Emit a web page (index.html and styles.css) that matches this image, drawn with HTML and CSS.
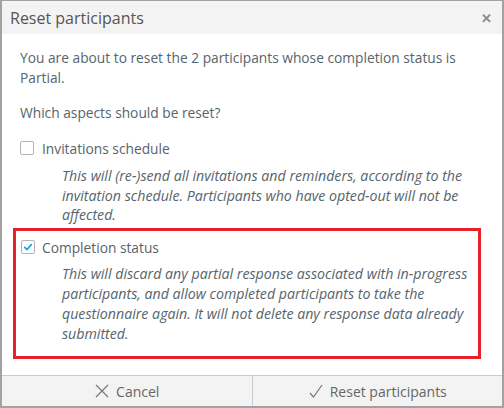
FILE: index.html
```html
<!DOCTYPE html>
<html>
<head>
<meta charset="utf-8">
<link rel="stylesheet" href="styles.css">
</head>
<body>
<div class="dialog">
  <div class="header">
    <span class="title">Reset participants</span>
    <span class="close">&#x2715;</span>
  </div>
  <div class="body">
    <p class="intro">You are about to reset the 2 participants whose completion status is Partial.</p>
    <p class="question">Which aspects should be reset?</p>
    <div class="option">
      <label class="opt-label"><span class="checkbox"></span>Invitations schedule</label>
      <p class="desc">This will (re-)send all invitations and reminders, according to the invitation schedule. Participants who have opted-out will not be affected.</p>
    </div>
    <div class="option highlighted">
      <label class="opt-label"><span class="checkbox checked"><svg viewBox="0 0 14 14" width="14" height="14"><path d="M3.2 7.4 L5.9 10 L10.8 4.2" fill="none" stroke="#1aa3e0" stroke-width="2" stroke-linecap="round" stroke-linejoin="round"/></svg></span>Completion status</label>
      <p class="desc">This will discard any partial response associated with in-progress participants, and allow completed participants to take the questionnaire again. It will not delete any response data already submitted.</p>
    </div>
  </div>
  <div class="footer">
    <button class="btn"><svg class="ico" viewBox="0 0 16 16" width="16" height="16"><path d="M2 2 L14 14 M14 2 L2 14" stroke="#777" stroke-width="1.2" fill="none"/></svg>Cancel</button>
    <button class="btn sep"><svg class="ico" viewBox="0 0 16 16" width="16" height="16"><path d="M2 10 L5.5 14 L14 2" stroke="#777" stroke-width="1.2" fill="none"/></svg>Reset participants</button>
  </div>
</div>
</body>
</html>
```

FILE: styles.css
```css
html, body {
  margin: 0;
  padding: 0;
  background: #fff;
}
.dialog {
  width: 504px;
  height: 408px;
  box-sizing: border-box;
  border: 2px solid #a2a2a2;
  border-top-width: 1px;
  display: flex;
  flex-direction: column;
  font-family: "Open Sans", Lato, sans-serif;
  color: #56646b;
  background: #fff;
}
.header {
  height: 33px;
  flex: none;
  background: #f3f3f3;
  display: flex;
  align-items: center;
  justify-content: space-between;
  padding: 0 10px 0 8px;
}
.title {
  font-size: 16px;
  color: #555;
}
.close {
  font-size: 13px;
  font-weight: bold;
  color: #8a8a8a;
}
.body {
  flex: 1;
  padding: 14px 14px 0 18px;
  font-size: 13.75px;
  line-height: 19.5px;
}
.body p {
  margin: 0;
}
.intro {
  margin-bottom: 16px !important;
}
.question {
  margin-bottom: 16px !important;
}
.option {
  padding: 0;
}
.opt-label {
  display: flex;
  align-items: center;
  height: 19.5px;
}
.checkbox {
  width: 14px;
  height: 14px;
  box-sizing: border-box;
  border: 1px solid #b5b5b5;
  border-radius: 2px;
  margin-right: 8px;
  display: inline-flex;
  align-items: center;
  justify-content: center;
  background: #fff;
}
.checkbox svg {
  display: block;
}
.desc {
  font-style: italic;
  font-size: 14.2px;
  padding-left: 42px;
  margin-top: 8px !important;
  margin-bottom: 3px !important;
}
.highlighted {
  border: 3px solid #e8202a;
  margin-left: -7px;
  margin-right: 7px;
  padding: 7px 0 12px 5px;
}
.highlighted .checkbox {
  margin-right: 7px;
}
.highlighted .desc {
  padding-left: 41px;
  line-height: 20px;
  margin-top: 7px !important;
  margin-bottom: 0 !important;
}
.footer {
  height: 30px;
  flex: none;
  display: flex;
  border-top: 1px solid #c8ccd4;
  background: #f3f3f3;
}
.btn {
  flex: 1;
  border: none;
  background: transparent;
  font-family: "Open Sans", Lato, sans-serif;
  font-size: 14px;
  color: #666;
  display: flex;
  align-items: center;
  justify-content: center;
  padding: 0;
}
.btn.sep {
  border-left: 1px solid #c8ccd4;
}
.ico {
  margin-right: 6px;
}
```
